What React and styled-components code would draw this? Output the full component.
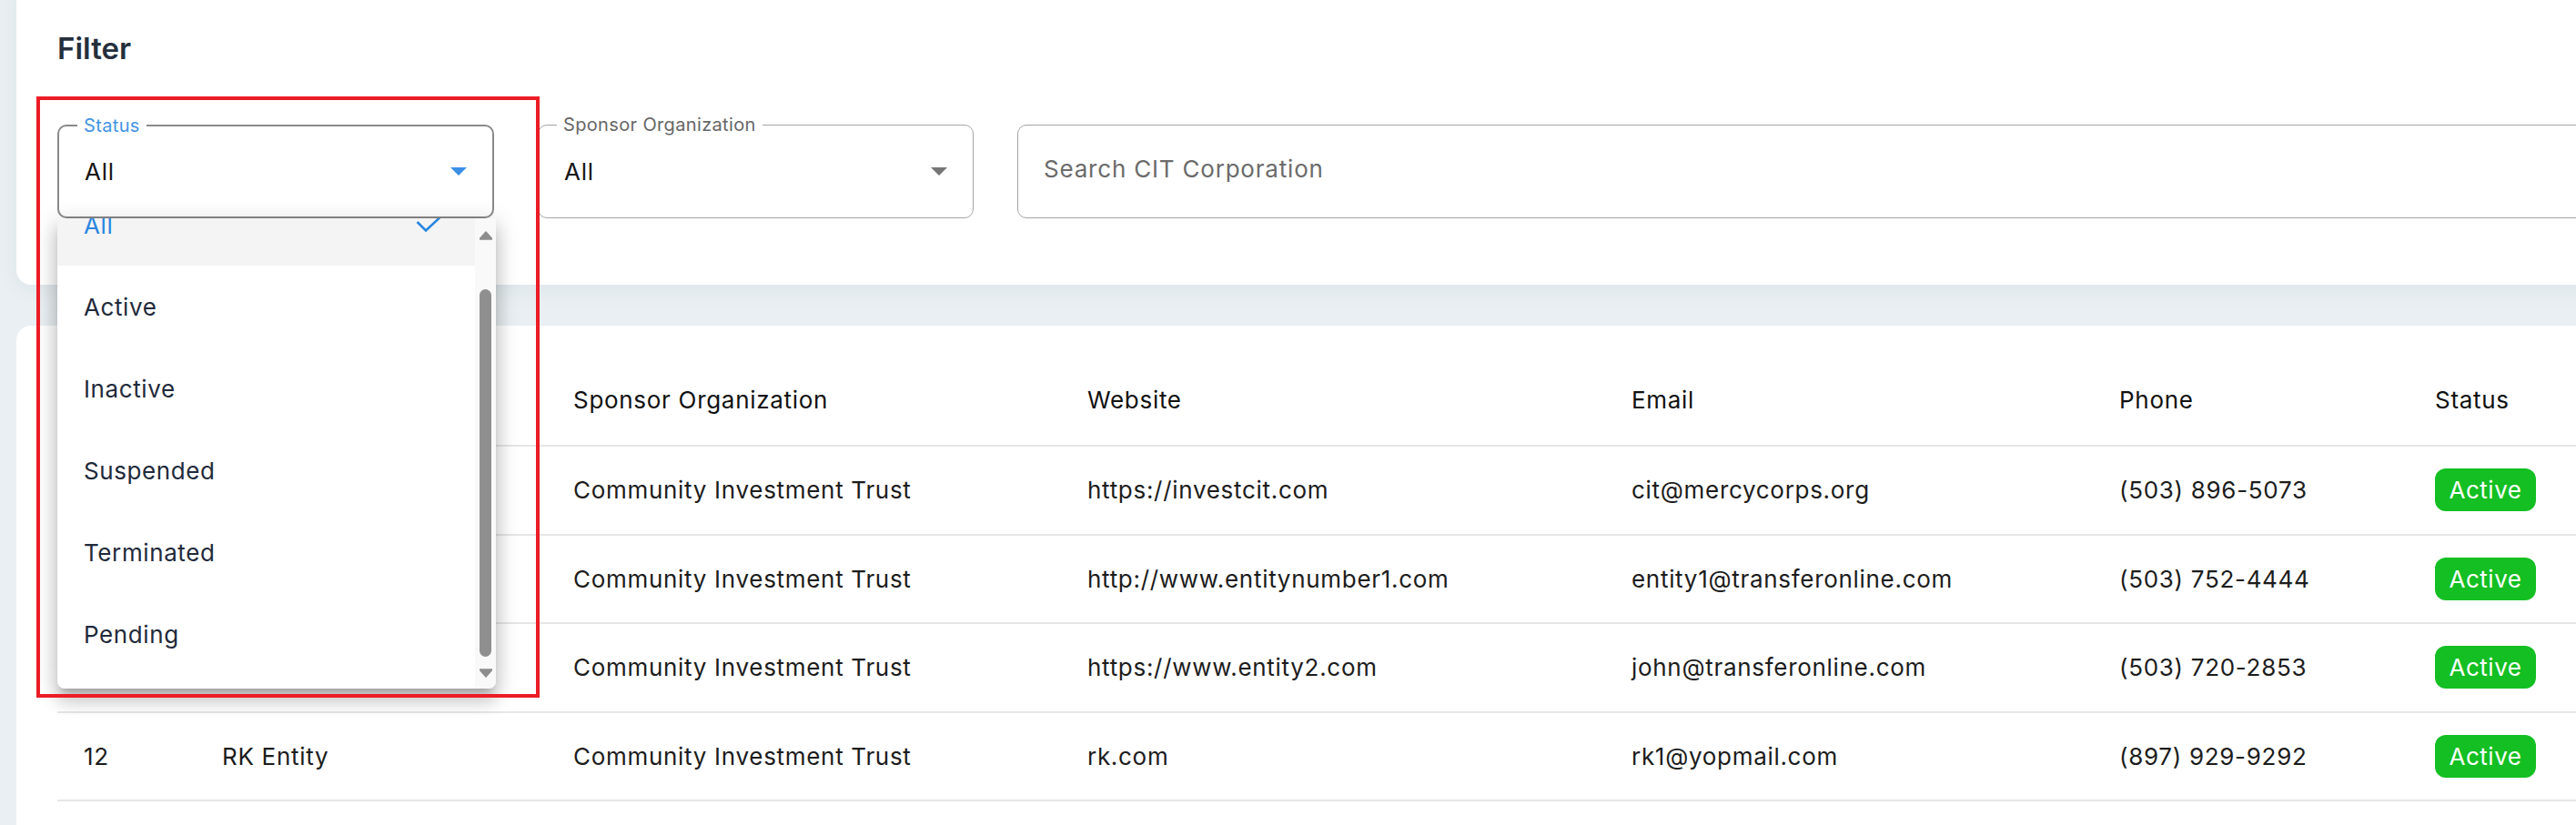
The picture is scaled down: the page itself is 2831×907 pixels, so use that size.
import React from 'react'
import styled, { createGlobalStyle } from 'styled-components'

const GlobalStyle = createGlobalStyle`
  html, body {
    margin: 0;
    padding: 0;
    background: #e9eff2;
    overflow: hidden;
  }
  body {
    font-family: Inter, 'Noto Sans', sans-serif;
    color: #1b1b1b;
  }
  * {
    box-sizing: border-box;
  }
`

const Page = styled.div`
  width: 100vw;
  height: 907px;
  overflow: hidden;
  padding-left: 18px;
`

const Stack = styled.div`
  margin-right: -80px;
`

const FilterCard = styled.section`
  background: #fff;
  margin-top: -20px;
  border-radius: 0 0 16px 16px;
  padding: 53px 45px 73px;
  box-shadow: 0 6px 24px rgba(40, 60, 80, 0.05);
`

const Title = styled.h2`
  margin: 0 0 64px;
  font-size: 33px;
  line-height: 40px;
  font-weight: 600;
  color: #252f3d;
`

const FieldRow = styled.div`
  display: flex;
  gap: 48px;
`

const Field = styled.div`
  position: relative;
  flex: ${p => (p.$width ? `0 0 ${p.$width}px` : '1')};
  height: 103px;
  border: ${p => (p.$focused ? '2px solid #8a8a8a' : '1px solid #a5a5a5')};
  border-radius: 10px;
  display: flex;
  align-items: center;
  justify-content: space-between;
  padding: 0 28px ${p => (p.$search ? '6px' : '0')};
`

const Label = styled.span`
  position: absolute;
  top: -13px;
  left: 20px;
  padding: 0 7px;
  background: #fff;
  font-size: 20px;
  line-height: 24px;
  letter-spacing: 0.35px;
  color: ${p => (p.$focused ? '#4294e4' : '#666')};
`

const Value = styled.span`
  font-size: 26px;
  letter-spacing: 0.7px;
  color: #151515;
`

const Placeholder = styled.span`
  font-size: 26px;
  letter-spacing: 0.8px;
  color: #6b6b6b;
`

const Menu = styled.div`
  position: absolute;
  top: calc(100% + 2px);
  left: -2px;
  width: 482px;
  height: 517px;
  z-index: 5;
  display: flex;
  background: #fff;
  border-radius: 0 0 8px 8px;
  overflow: hidden;
  box-shadow: 0 9px 9px -5px rgba(0, 0, 0, 0.2), 0 14px 18px 2px rgba(0, 0, 0, 0.14),
    0 5px 25px 4px rgba(0, 0, 0, 0.12);
`

const MenuList = styled.div`
  flex: 1;
  overflow: hidden;
`

const MenuItems = styled.ul`
  list-style: none;
  margin: -38px 0 0;
  padding: 0;
`

const MenuItem = styled.li`
  height: 90px;
  display: flex;
  align-items: center;
  justify-content: space-between;
  padding: 0 37px 0 29px;
  font-size: 26px;
  letter-spacing: 0.6px;
  background: ${p => (p.$selected ? '#f4f4f4' : 'transparent')};
  color: ${p => (p.$selected ? '#2a86e0' : '#1f2a3b')};
`

const Scrollbar = styled.div`
  width: 23px;
  background: #f9f9f9;
  display: flex;
  flex-direction: column;
  align-items: center;
`

const ScrollButton = styled.div`
  height: ${p => p.$h}px;
  display: flex;
  align-items: center;
  justify-content: center;
`

const Track = styled.div`
  flex: 1;
  display: flex;
  flex-direction: column;
`

const Thumb = styled.div`
  flex: 1;
  margin-top: 40px;
  width: 13px;
  border-radius: 7px;
  background: #8f8f8f;
`

const Annotation = styled.div`
  position: absolute;
  left: -25px;
  top: -33px;
  width: 553px;
  height: 661px;
  border: 4px solid #ec1c24;
  z-index: 10;
  pointer-events: none;
`

const TableCard = styled.section`
  margin-top: 45px;
  background: #fff;
  border-radius: 16px 0 0 0;
  padding: 32px 45px 0;
  height: 600px;
`

const Row = styled.div`
  display: grid;
  grid-template-columns: 152px 386px 565px 598px 536px 347px 1fr;
  height: ${p => (p.$head ? '101px' : '97.5px')};
  border-bottom: 2px solid #e6e6e6;
`

const Cell = styled.div`
  display: flex;
  align-items: center;
  padding-left: 29px;
  font-size: 26px;
  letter-spacing: 0.7px;
  white-space: nowrap;
  color: ${p => (p.$head ? '#111' : '#1c1c1c')};
`

const Badge = styled.span`
  display: inline-flex;
  align-items: center;
  justify-content: center;
  width: 111px;
  height: 47px;
  border-radius: 12px;
  background: #13bf22;
  color: #fff;
  font-size: 26px;
  letter-spacing: 0.5px;
`

const Caret = ({ color }) => (
  <svg width='18' height='9' viewBox='0 0 18 9'>
    <polygon points='0,0 18,0 9,9' fill={color} />
  </svg>
)

const Check = () => (
  <svg width='28' height='18' viewBox='0 0 28 18'>
    <polyline points='1.5,6 11,15.5 26.5,1' fill='none' stroke='#2a86e0' strokeWidth='2.6' />
  </svg>
)

const Arrow = ({ down }) => (
  <svg width='14' height='10' viewBox='0 0 14 10'>
    <polygon
      points={down ? '0,1 14,1 7,9' : '0,9 14,9 7,1'}
      fill='#8d8d8d'
      stroke='#8d8d8d'
      strokeLinejoin='round'
      strokeWidth='1.5'
    />
  </svg>
)

const statuses = ['All', 'Active', 'Inactive', 'Suspended', 'Terminated', 'Pending']

const headers = ['ID', 'Name', 'Sponsor Organization', 'Website', 'Email', 'Phone', 'Status']

const rows = [
  { id: '9', name: 'CIT Corp', sponsor: 'Community Investment Trust', website: 'https://investcit.com', email: 'cit@mercycorps.org', phone: '(503) 896-5073' },
  { id: '10', name: 'Entity 1', sponsor: 'Community Investment Trust', website: 'http://www.entitynumber1.com', email: 'entity1@transferonline.com', phone: '(503) 752-4444' },
  { id: '11', name: 'Entity 2', sponsor: 'Community Investment Trust', website: 'https://www.entity2.com', email: 'john@transferonline.com', phone: '(503) 720-2853' },
  { id: '12', name: 'RK Entity', sponsor: 'Community Investment Trust', website: 'rk.com', email: 'rk1@yopmail.com', phone: '(897) 929-9292' }
]

export default function App() {
  return (
    <Page>
      <GlobalStyle />
      <Stack>
        <FilterCard>
          <Title>Filter</Title>
          <FieldRow>
            <Field $width={480} $focused>
              <Label $focused>Status</Label>
              <Value>All</Value>
              <Caret color='#3b8fe5' />
              <Menu>
                <MenuList>
                  <MenuItems>
                    {statuses.map(s => (
                      <MenuItem key={s} $selected={s === 'All'}>
                        <span>{s}</span>
                        {s === 'All' && <Check />}
                      </MenuItem>
                    ))}
                  </MenuItems>
                </MenuList>
                <Scrollbar>
                  <ScrollButton $h={38}>
                    <Arrow />
                  </ScrollButton>
                  <Track>
                    <Thumb />
                  </Track>
                  <ScrollButton $h={35}>
                    <Arrow down />
                  </ScrollButton>
                </Scrollbar>
              </Menu>
              <Annotation />
            </Field>
            <Field $width={479}>
              <Label>Sponsor Organization</Label>
              <Value>All</Value>
              <Caret color='#767676' />
            </Field>
            <Field $search>
              <Placeholder>Search CIT Corporation</Placeholder>
            </Field>
          </FieldRow>
        </FilterCard>

        <TableCard>
          <Row $head>
            {headers.map(h => (
              <Cell key={h} $head>
                {h}
              </Cell>
            ))}
          </Row>
          {rows.map(r => (
            <Row key={r.id}>
              <Cell>{r.id}</Cell>
              <Cell>{r.name}</Cell>
              <Cell>{r.sponsor}</Cell>
              <Cell>{r.website}</Cell>
              <Cell>{r.email}</Cell>
              <Cell>{r.phone}</Cell>
              <Cell>
                <Badge>Active</Badge>
              </Cell>
            </Row>
          ))}
        </TableCard>
      </Stack>
    </Page>
  )
}
